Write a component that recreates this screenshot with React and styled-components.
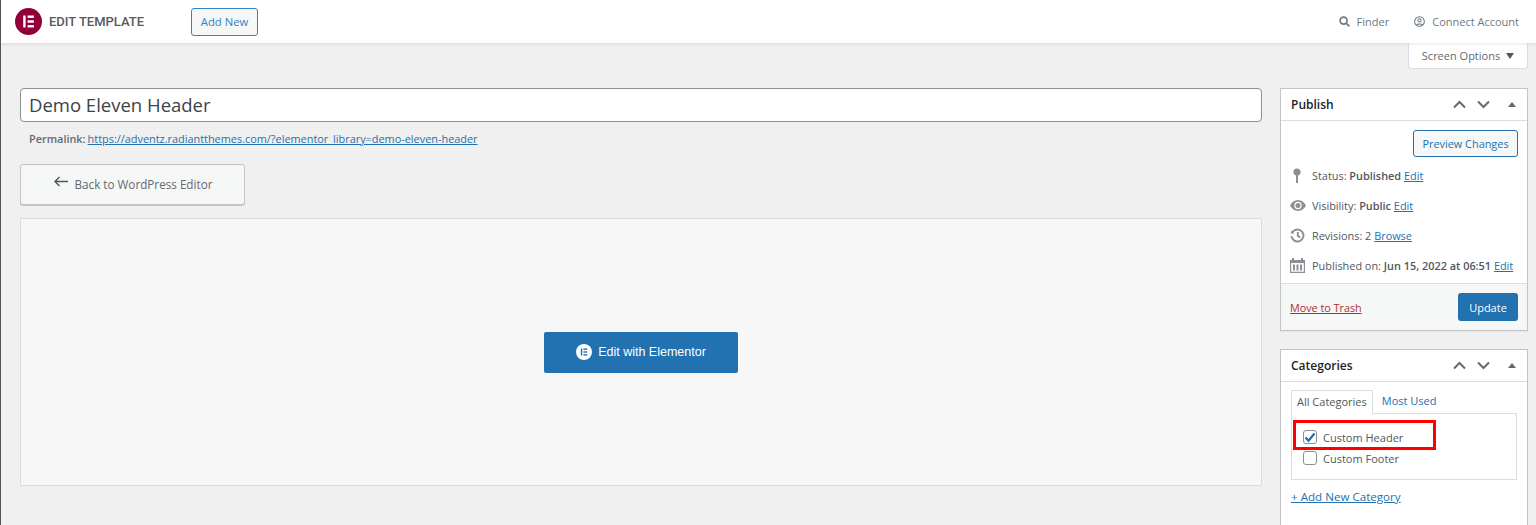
import React from "react";
import styled, { createGlobalStyle } from "styled-components";

const Global = createGlobalStyle`
  html, body { margin: 0; padding: 0; height: 525px; overflow: hidden; background: #f0f0f0; }
  body { font-family: "Open Sans", "Noto Sans", sans-serif; font-size: 11px; color: #50575e; }
  a { color: #2271b1; }
`;

const Page = styled.div`
  width: 1536px; height: 525px; overflow: hidden; box-sizing: border-box;
  border-left: 1px solid #50545a; display: flex; flex-direction: column;
`;
const TopBar = styled.header`
  height: 43px; flex: none; background: #fff; box-shadow: 0 1px 3px rgba(0,0,0,.1);
  display: flex; align-items: center; padding: 0 17px 0 14px; position: relative; z-index: 1;
`;
const LogoWrap = styled.span`width: 27px; height: 27px; flex: none; display: flex;`;
const TopTitle = styled.div`
  font-family: "Roboto", sans-serif; font-weight: 500; font-size: 13px; color: #58595c; margin-left: 7px; width: 142px;
`;
const OutlineButton = styled.a`
  display: flex; align-items: center; justify-content: center; box-sizing: border-box;
  border: 1px solid ${p => p.$bright ? "#3582c4" : "#2271b1"}; border-radius: 3px; background: #f6f7f7;
  color: ${p => p.$bright ? "#3582c4" : "#2271b1"}; font-size: ${p => p.$size}px;
  height: ${p => p.$h}px; width: ${p => p.$w}px;
`;
const TopRight = styled.div`margin-left: auto; display: flex; align-items: center; gap: 25px; color: #6d7882; font-size: 11px;`;
const TopItem = styled.div`display: flex; align-items: center; gap: 7px;`;
const ScreenRow = styled.div`display: flex; justify-content: flex-end; padding-right: 8px; flex: none;`;
const ScreenTab = styled.div`
  width: 120px; height: 26px; box-sizing: border-box; background: #fff; border: 1px solid #dcdcde; border-top: 0;
  border-radius: 0 0 4px 4px; display: flex; align-items: center; justify-content: center; gap: 6px; font-size: 11px; color: #646970;
`;
const Caret = styled.span`
  width: 0; height: 0; border-left: 4px solid transparent; border-right: 4px solid transparent;
  border-top: 6px solid #50575e;
`;
const Columns = styled.div`display: flex; gap: 18px; padding: 19px 8px 0 19px;`;
const Main = styled.main`width: 1242px; flex: none;`;
const Side = styled.aside`width: 248px; flex: none; display: flex; flex-direction: column; gap: 18px;`;
const TitleInput = styled.div`
  height: 34px; box-sizing: border-box; border: 1px solid #8c8f94; border-radius: 4px; background: #fff;
  font-size: 18.5px; color: #3c434a; padding: 0 0 2px 8px; display: flex; align-items: center;
`;
const Permalink = styled.div`
  height: 33px; display: flex; align-items: center; padding-left: 9px; gap: 2px; font-size: 10.9px; color: #646970;
  b { font-weight: 600; }
`;
const BackButton = styled.div`
  width: 225px; height: 41px; box-sizing: border-box; margin-top: 9px; padding-bottom: 2px; background: #f6f7f7; border: 1px solid #c3c4c7;
  border-radius: 3px; box-shadow: 0 1px 0 #c3c4c7; display: flex; align-items: center; justify-content: center; gap: 6px;
  font-size: 11.7px; color: #646970;
  svg { position: relative; top: -2px; }
`;
const EditorBox = styled.div`
  margin-top: 13px; height: 268px; box-sizing: border-box; background: #f7f7f7; border: 1px solid #dcdcde;
  display: flex; align-items: center; justify-content: center;
`;
const ElementorButton = styled.div`
  width: 194px; height: 41px; background: #2271b1; border-radius: 2px; color: #fff;
  font-family: "Liberation Sans", Arial, sans-serif; font-size: 12.5px; display: flex; align-items: center; justify-content: center; gap: 6px;
`;
const Box = styled.section`background: #fff; border: 1px solid #c3c4c7; box-shadow: 0 1px 1px rgba(0,0,0,.04);`;
const BoxHead = styled.div`
  height: 31px; padding: 0 11px 0 10px; display: flex; align-items: center; justify-content: space-between;
  border-bottom: 1px solid #dcdcde; font-weight: 600; font-size: 12px; color: #1d2327;
`;
const Arrows = styled.div`display: flex; align-items: center; gap: 9px;`;
const Tri = styled.span`
  width: 0; height: 0; margin-left: 8px; border-left: 4px solid transparent; border-right: 4px solid transparent;
  border-bottom: 5px solid #646970;
`;
const PreviewRow = styled.div`display: flex; justify-content: flex-end; padding: 9px 9px 0 0;`;
const Meta = styled.div`padding: 3px 0 3px 9px; display: flex; flex-direction: column;`;
const MetaRow = styled.div`
  height: 30px; display: flex; align-items: center; font-size: 10.9px; color: #50575e;
  b { font-weight: 600; }
`;
const MetaText = styled.span`white-space: pre;`;
const MetaIcon = styled.span`
  width: 22px; flex: none; display: flex; padding-left: ${p => p.$inset || 0}px; box-sizing: border-box;
`;
const Actions = styled.div`
  height: 47px; box-sizing: border-box; background: #f6f7f7; border-top: 1px solid #dcdcde; display: flex; align-items: center;
  justify-content: space-between; padding: 0 9px;
`;
const Trash = styled.a`color: #b32d2e; text-decoration: underline; font-size: 10.8px;`;
const Update = styled.div`
  width: 60px; height: 28px; background: #2271b1; border-radius: 3px; color: #fff; display: flex; align-items: center; justify-content: center; font-size: 11px;
`;
const CatBody = styled.div`padding: 7px 10px 0 10px; height: 160px;`;
const Tabs = styled.div`display: flex; align-items: flex-end; height: 24px; position: relative;`;
const Tab = styled.div`
  height: 24px; box-sizing: border-box; padding: 0 ${p => p.$active ? "5px" : "9px"} 2px; display: flex; align-items: center; font-size: 11px;
  color: ${p => p.$active ? "#50575e" : "#2271b1"};
  ${p => p.$active && "border: 1px solid #dcdcde; border-bottom: 1px solid #fff; margin-bottom: -1px; background:#fff; position:relative; z-index:1;"}
`;
const CatList = styled.div`
  height: 67px; box-sizing: border-box; border: 1px solid #dcdcde; padding: 16px 0 0 11px; position: relative;
  display: flex; flex-direction: column; gap: 7px;
`;
const CatRow = styled.label`display: flex; align-items: center; gap: 6px; height: 14px; font-size: 11px; color: #50575e;`;
const Check = styled.span`
  width: 14px; height: 14px; box-sizing: border-box; border: 1px solid #8c8f94; border-radius: 3px; background: #fff;
  display: flex; align-items: center; justify-content: center;
`;
const Highlight = styled.div`
  position: absolute; left: 1px; top: 6px; width: 143px; height: 30px; box-sizing: border-box; border: 3px solid #f00;
`;
const AddLink = styled.a`display: block; margin-top: 9px; font-size: 11.6px; font-weight: 500; text-decoration: underline; color: #2271b1;`;

const Chevron = ({ up }) => (
  <svg width="15" height="9" viewBox="0 0 15 9" fill="none" stroke="#646970" strokeWidth="2">
    <path d={up ? "M2 7.5 7.5 2 13 7.5" : "M2 1.5 7.5 7 13 1.5"} />
  </svg>
);
const BoxControls = () => (
  <Arrows><Chevron up /><Chevron /><Tri /></Arrows>
);
const EIcon = ({ size, bg, fg }) => (
  <svg width={size} height={size} viewBox="0 0 27 27">
    <circle cx="13.5" cy="13.5" r="13.5" fill={bg} />
    <rect x="8.2" y="7.5" width="2.4" height="12" fill={fg} />
    <rect x="12.6" y="7.5" width="6.3" height="2.4" fill={fg} />
    <rect x="12.6" y="12.3" width="6.3" height="2.4" fill={fg} />
    <rect x="12.6" y="17.1" width="6.3" height="2.4" fill={fg} />
  </svg>
);

export default function App() {
  return (
    <Page>
      <Global />
      <TopBar>
        <LogoWrap><EIcon size={27} bg="#92003b" fg="#fff" /></LogoWrap>
        <TopTitle>EDIT TEMPLATE</TopTitle>
        <OutlineButton $bright $w={67} $h={28} $size={11.3}>Add New</OutlineButton>
        <TopRight>
          <TopItem>
            <svg width="11" height="11" viewBox="0 0 11 11" fill="none" stroke="#6d7882" strokeWidth="1.7"><circle cx="4.6" cy="4.6" r="3.5" /><path d="M7.3 7.3 10.4 10.4" /></svg>
            Finder
          </TopItem>
          <TopItem>
            <svg width="11" height="11" viewBox="0 0 12 12" fill="none" stroke="#6d7882" strokeWidth="1.1"><circle cx="6" cy="6" r="5.3" /><circle cx="6" cy="4.8" r="1.8" /><path d="M2.8 9.8C3.6 8.2 8.4 8.2 9.2 9.8" /></svg>
            Connect Account
          </TopItem>
        </TopRight>
      </TopBar>
      <ScreenRow><ScreenTab>Screen Options <Caret /></ScreenTab></ScreenRow>
      <Columns>
        <Main>
          <TitleInput>Demo Eleven Header</TitleInput>
          <Permalink><b>Permalink:</b> <a href="#p">https://adventz.radiantthemes.com/?elementor_library=demo-eleven-header</a></Permalink>
          <BackButton>
            <svg width="16" height="12" viewBox="0 0 16 12" fill="none" stroke="#50575e" strokeWidth="1.4"><path d="M15 5.5H2M6.5 1 2 5.5 6.5 10" /></svg>
            Back to WordPress Editor
          </BackButton>
          <EditorBox>
            <ElementorButton><EIcon size={16} bg="#fff" fg="#2271b1" />Edit with Elementor</ElementorButton>
          </EditorBox>
        </Main>
        <Side>
          <Box>
            <BoxHead>Publish<BoxControls /></BoxHead>
            <PreviewRow><OutlineButton $w={105} $h={27} $size={10.9}>Preview Changes</OutlineButton></PreviewRow>
            <Meta>
              <MetaRow>
                <MetaIcon $inset={3}><svg width="8" height="15" viewBox="0 0 8 15" fill="#8c8f94"><circle cx="4" cy="4" r="3.6" /><rect x="3" y="6" width="2" height="9" /></svg></MetaIcon>
                <MetaText>Status: <b>Published</b> <a href="#e">Edit</a></MetaText>
              </MetaRow>
              <MetaRow>
                <MetaIcon><svg width="16" height="11" viewBox="0 0 16 11" fill="#8c8f94"><path fillRule="evenodd" d="M8 0c3.500 0 6.300 2.200 8 5.500C14.300 8.800 11.500 11 8 11S1.700 8.800 0 5.500C1.700 2.200 4.500 0 8 0Zm0 1.800a3.700 3.700 0 1 0 0 7.400 3.700 3.700 0 0 0 0-7.400Z" /><circle cx="8" cy="5.500" r="2.500" /></svg></MetaIcon>
                <MetaText>Visibility: <b>Public</b> <a href="#e">Edit</a></MetaText>
              </MetaRow>
              <MetaRow>
                <MetaIcon><svg width="15" height="15" viewBox="0 0 15 15" fill="none" stroke="#8c8f94" strokeWidth="1.900"><path d="M2.600 4A6 6 0 1 1 1.500 8" /><path d="M7.800 4v4l2.500 1.500" /><path d="M0.500 5.500h4l-3-3z" fill="#8c8f94" stroke="none" /></svg></MetaIcon>
                <MetaText>Revisions: 2 <a href="#b">Browse</a></MetaText>
              </MetaRow>
              <MetaRow>
                <MetaIcon><svg width="15" height="15" viewBox="0 0 15 15" fill="#8c8f94"><path fillRule="evenodd" d="M0 2h2V0h2v2h7V0h2v2h2v13H0V2Zm1.200 3v8.800h12.600V5H1.200Z" /><rect x="3" y="6.500" width="2" height="6" /><rect x="6.500" y="6.500" width="2" height="6" /><rect x="10" y="6.500" width="2" height="6" /></svg></MetaIcon>
                <MetaText>Published on: <b>Jun 15, 2022 at 06:51</b> <a href="#e">Edit</a></MetaText>
              </MetaRow>
            </Meta>
            <Actions><Trash>Move to Trash</Trash><Update>Update</Update></Actions>
          </Box>
          <Box>
            <BoxHead>Categories<BoxControls /></BoxHead>
            <CatBody>
              <Tabs><Tab $active>All Categories</Tab><Tab>Most Used</Tab></Tabs>
              <CatList>
                <Highlight />
                <CatRow>
                  <Check><svg width="12" height="11" viewBox="0 0 12 11" fill="none" stroke="#2271b1" strokeWidth="2.200"><path d="M1.500 5.500 4.500 8.800 10.500 1.500" /></svg></Check>
                  Custom Header
                </CatRow>
                <CatRow><Check />Custom Footer</CatRow>
              </CatList>
              <AddLink>+ Add New Category</AddLink>
            </CatBody>
          </Box>
        </Side>
      </Columns>
    </Page>
  );
}
